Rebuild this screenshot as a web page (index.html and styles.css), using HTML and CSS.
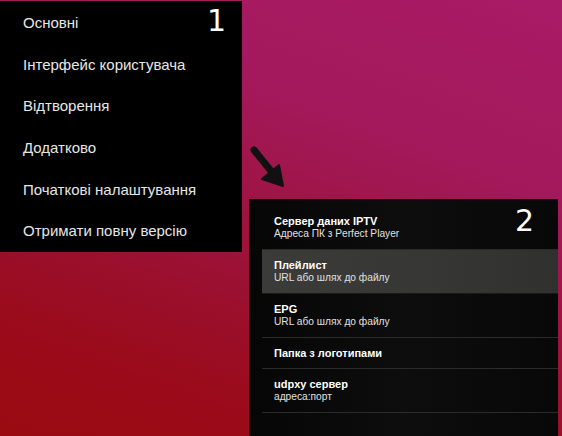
FILE: index.html
```html
<!DOCTYPE html>
<html lang="uk">
<head>
<meta charset="utf-8">
<link rel="stylesheet" href="styles.css">
</head>
<body>
<div class="stage">
  <div class="menu">
    <div class="menu-num">1</div>
    <div class="menu-item">Основні</div>
    <div class="menu-item">Інтерфейс користувача</div>
    <div class="menu-item">Відтворення</div>
    <div class="menu-item">Додатково</div>
    <div class="menu-item">Початкові налаштування</div>
    <div class="menu-item">Отримати повну версію</div>
  </div>
  <svg class="arrow" width="40" height="46" viewBox="0 0 40 46">
    <line x1="5" y1="7" x2="22" y2="28" stroke="#111" stroke-width="7" stroke-linecap="round"/>
    <polygon points="34,43 13,36 30,22" fill="#111" stroke="#111" stroke-width="2" stroke-linejoin="round"/>
  </svg>
  <div class="settings">
    <div class="settings-num">2</div>
    <div class="row">
      <div class="row-title">Сервер даних IPTV</div>
      <div class="row-sub">Адреса ПК з Perfect Player</div>
    </div>
    <div class="row active">
      <div class="row-title">Плейлист</div>
      <div class="row-sub">URL або шлях до файлу</div>
    </div>
    <div class="row">
      <div class="row-title">EPG</div>
      <div class="row-sub">URL або шлях до файлу</div>
    </div>
    <div class="row single">
      <div class="row-title">Папка з логотипами</div>
    </div>
    <div class="row">
      <div class="row-title">udpxy сервер</div>
      <div class="row-sub">адреса:порт</div>
    </div>
  </div>
</div>
</body>
</html>
```
FILE: styles.css
```css
html, body {
  margin: 0;
  padding: 0;
  width: 562px;
  height: 436px;
  overflow: hidden;
}
body {
  background: linear-gradient(200deg, #a91b66 0%, #a3195c 30%, #9c1238 58%, #9a0b1c 80%, #9a0a10 100%);
  font-family: "Liberation Sans", Arial, sans-serif;
}
.stage {
  display: grid;
  grid-template-columns: 249px 1fr;
  grid-template-rows: 199px 1fr;
  width: 562px;
  height: 436px;
}
.menu {
  grid-column: 1;
  grid-row: 1 / 3;
  align-self: start;
  margin-top: 1px;
  width: 242px;
  height: 251px;
  background: #000;
  box-sizing: border-box;
  padding-top: 1px;
  display: flex;
  flex-direction: column;
  position: relative;
}
.menu-num {
  position: absolute;
  right: 16px;
  top: 2px;
  font-family: "DejaVu Sans", sans-serif;
  font-size: 30px;
  color: #fff;
}
.menu-item {
  height: 41.6px;
  display: flex;
  align-items: center;
  padding-left: 23px;
  color: #e6e6e6;
  font-size: 15px;
}
.arrow {
  grid-column: 2;
  grid-row: 1;
  align-self: start;
  margin-top: 143px;
}
.settings {
  grid-column: 2;
  grid-row: 2;
  width: 309px;
  background: linear-gradient(90deg, #060606 0%, #0d0d0d 50%, #080808 100%);
  box-sizing: border-box;
  padding-left: 13px;
  padding-top: 7px;
  position: relative;
}
.settings-num {
  position: absolute;
  right: 24px;
  top: 4px;
  font-family: "DejaVu Sans", sans-serif;
  font-size: 30px;
  color: #fff;
}
.row {
  height: 44px;
  box-sizing: border-box;
  border-bottom: 1px solid #2b2b2b;
  padding-left: 12px;
  display: flex;
  flex-direction: column;
  justify-content: center;
}
.row.single {
  height: 31px;
}
.row.active {
  background: linear-gradient(90deg, #3b3b39 0%, #363634 60%, #30302e 100%);
  border-bottom-color: #1a1a1a;
}
.row-title {
  color: #fff;
  font-size: 11px;
  font-weight: bold;
  line-height: 13px;
}
.row-sub {
  color: #e0e0e0;
  font-size: 10.2px;
  line-height: 12px;
}
```
